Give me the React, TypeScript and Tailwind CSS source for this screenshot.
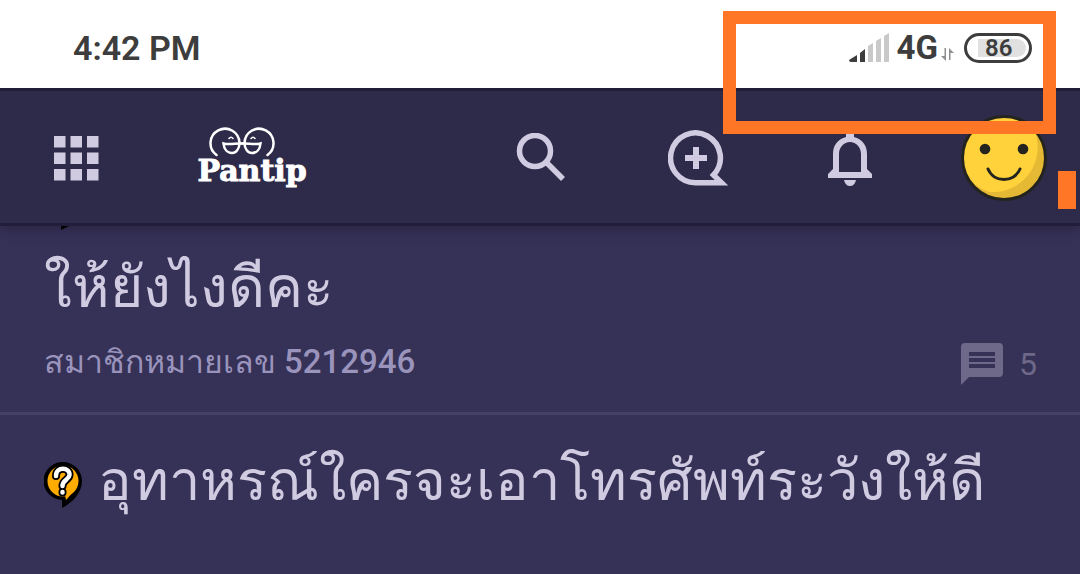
import React from 'react';

const SignalIcon: React.FC = () => (
  <svg viewBox="0 0 40 30" className="w-10 h-[30px] mr-2" aria-hidden="true">
    <path d="M0 27l8-5v7H2q-2 0-2-2z M11 20l5-4v13h-5z" fill="#3d3d3d" />
    <path d="M19 13l5-3v19h-5z M27 8l5-3v24h-5z M35 3l5-3v29h-5z" fill="#c9c9c9" />
  </svg>
);

const DataArrowsIcon: React.FC = () => (
  <svg viewBox="0 0 13 13" className="w-[13px] h-[13px] mt-3 mr-[10px]" aria-hidden="true">
    <path d="M3.500 0h1.500v13L0 8h3.500z M8 0l5 5H9.500v7H8V0z" fill="#8f8f8f" />
  </svg>
);

const StatusBar: React.FC = () => (
  <div className="relative z-10 h-[88px] bg-white flex items-center justify-between pl-[73px] pr-12 pt-2 text-[#3d3d3d]">
    <span className="text-[34px] leading-10 font-semibold">4:42 PM</span>
    <div className="flex items-center">
      <SignalIcon />
      <span className="text-[33px] leading-10 font-bold mr-[3px]">4G</span>
      <DataArrowsIcon />
      <div className="w-[68px] h-[30px] rounded-full border-3 border-[#3d3d3d] p-[3px] pl-[11px]">
        <div className="h-full bg-[#e0e0e0] rounded-l-xs rounded-r-full flex items-center pl-[7px] text-[24px] font-semibold">
          86
        </div>
      </div>
    </div>
  </div>
);

const GridIcon: React.FC = () => (
  <svg viewBox="0 0 45 45" className="w-[45px] h-[45px]" fill="#d1cbe2" aria-hidden="true">
    {[0, 16.5, 33].map((y) =>
      [0, 16.5, 33].map((x) => <rect key={`${x}-${y}`} x={x} y={y} width="11.500" height="11.500" />)
    )}
  </svg>
);

const Logo: React.FC = () => (
  <a href="#" className="flex flex-col items-center w-28 text-white" aria-label="Pantip">
    <svg viewBox="0 0 68 30" className="w-[68px] h-[30px] mr-5" fill="none" stroke="currentColor" strokeWidth="2.500" strokeLinecap="round" aria-hidden="true">
      <path d="M8.500 28A14.500 14.500 0 1 1 31.500 16C31.500 22 28 26 24 26C19 26 16 22 15.500 16.500C20 18 27 16.500 33 16.500" />
      <path d="M59.500 28A14.500 14.500 0 1 0 36.500 16C36.500 22 40 26 44 26C49 26 52 22 52.500 16.500C48 18 41 16.500 35 16.500" />
      <path d="M31 16.500h6" />
      <path d="M21 11.500q2-2.500 4 0 M43 11.500q2-2.500 4 0" strokeWidth="1.500" />
    </svg>
    <span className="-mt-1 font-['DejaVu_Serif',serif] font-bold text-[30px] leading-9 [-webkit-text-stroke:1px_white]">
      Pantip
    </span>
  </a>
);

const SearchIcon: React.FC = () => (
  <svg viewBox="0 0 50 50" className="w-[50px] h-[50px]" fill="none" stroke="#d1cbe2" aria-hidden="true">
    <circle cx="19" cy="18" r="15.500" strokeWidth="5.500" />
    <path d="M31 30l16 16" strokeWidth="5.500" />
  </svg>
);

const NewTopicIcon: React.FC = () => (
  <svg viewBox="0 0 60 56" className="w-[60px] h-14" fill="none" stroke="#d1cbe2" strokeWidth="5.500" aria-hidden="true">
    <path d="M53.500 52.700H28A24.900 24.900 0 1 1 45.500 45z" />
    <path d="M28 17v22M17 28h22" strokeWidth="6" />
  </svg>
);

const BellIcon: React.FC = () => (
  <svg viewBox="0 0 44 56" className="w-11 h-14" fill="#d1cbe2" aria-hidden="true">
    <path
      fillRule="evenodd"
      d="M18 0h8v7c8 2 13 8 13 17v15l5 5v4H0v-4l5-5V24C5 15 10 9 18 7z M11 42h22V24c0-7-5-12-11-12s-11 5-11 12z"
    />
    <path d="M16 50h12c-1 4-3 6-6 6s-5-2-6-6z" />
  </svg>
);

const SmileyAvatar: React.FC = () => (
  <svg viewBox="0 0 88 88" className="w-22 h-22" aria-hidden="true">
    <circle cx="44" cy="44" r="41.500" fill="#e6b935" />
    <path d="M75 17C86 50 62 80 29 78A36 36 0 0 1 3 40A41 41 0 0 1 75 17z" fill="#ffd13b" />
    <circle cx="44" cy="44" r="41.500" fill="none" stroke="#24241f" strokeWidth="3" />
    <circle cx="25" cy="35" r="5.300" fill="#24241f" />
    <circle cx="63" cy="35" r="5.300" fill="#24241f" />
    <path d="M28 55c6 14 26 14 32 0" fill="none" stroke="#24241f" strokeWidth="3" strokeLinecap="round" />
  </svg>
);

const NavBar: React.FC = () => (
  <header className="relative h-[138px] bg-[#2e2a49] border-y-3 border-[#221d39] flex items-center pl-[54px] pr-8 pt-[2px] shadow-[0_3px_12px_#2a2642]">
    <button type="button" aria-label="Menu" className="mr-[97px]">
      <GridIcon />
    </button>
    <Logo />
    <button type="button" aria-label="Search" className="ml-auto mr-[102px]">
      <SearchIcon />
    </button>
    <button type="button" aria-label="New topic" className="mr-[100px]">
      <NewTopicIcon />
    </button>
    <button type="button" aria-label="Notifications" className="mr-[88px]">
      <BellIcon />
    </button>
    <button type="button" aria-label="Profile">
      <SmileyAvatar />
    </button>
  </header>
);

const QuestionIcon: React.FC = () => (
  <svg viewBox="0 0 38 46" className="w-[38px] h-[46px] mt-2 shrink-0" aria-hidden="true">
    <path d="M19 0a19 19 0 0 1 19 19c0 12-10 22-20 27v-8A19 19 0 0 1 19 0z" fill="#000" />
    <circle cx="19" cy="19" r="15.500" fill="#ffab00" />
    <path d="M21 33l9-4-8 9z" fill="#ffab00" />
    <g fill="none" strokeLinecap="round" strokeLinejoin="round">
      <path d="M12 14c0-10 14-9 13.500-1-.5 5-7 5-7 11M18.500 30v.5" stroke="#000" strokeWidth="8" />
      <path d="M12 14c0-10 14-9 13.500-1-.5 5-7 5-7 11M18.500 30v.5" stroke="#fff" strokeWidth="4.500" />
    </g>
  </svg>
);

const CommentIcon: React.FC = () => (
  <svg viewBox="0 0 42 42" className="w-[42px] h-[42px]" aria-hidden="true">
    <path
      fillRule="evenodd"
      fill="#6e6889"
      d="M4 0h34q4 0 4 4v26q0 4-4 4H8l-8 8V4q0-4 4-4z M8 9v4h26V9z M8 15v4h26v-4z M8 21v4h26v-4z"
    />
  </svg>
);

const TopicList: React.FC = () => (
  <main className="text-[#d1cbe2]">
    <article className="relative h-[189px] pl-11 pr-[43px] pt-5 border-b-3 border-[#454064]">
      {/* tail of the topic icon that is scrolled under the nav bar */}
      <svg viewBox="0 0 8 4" className="absolute top-0 left-[61px] w-2 h-1" aria-hidden="true">
        <path d="M0 0h8L0 4z" fill="#000" />
      </svg>
      <h2 className="text-[57px] leading-[84px]">
        <a href="#">ให้ยังไงดีคะ</a>
      </h2>
      <div className="flex justify-between items-center text-[32px] leading-[60px]">
        <a href="#" className="text-[#9a94bd]">
          สมาชิกหมายเลข <span className="font-medium text-[33px]">5212946</span>
        </a>
        <span className="flex items-center gap-4 pt-1 text-[#6e6889]">
          <CommentIcon />5
        </span>
      </div>
    </article>
    <article className="flex items-center gap-4 px-11 pt-6">
      <QuestionIcon />
      <h2 className="text-[56px] leading-[84px] whitespace-nowrap">
        <a href="#">อุทาหรณ์ใครจะเอาโทรศัพท์ระวังให้ดี</a>
      </h2>
    </article>
  </main>
);

const App: React.FC = () => (
  <div className="relative min-h-screen overflow-hidden bg-[#363156] font-[Roboto,sans-serif]">
    <StatusBar />
    <NavBar />
    <TopicList />
    {/* orange highlight marks over the status icons */}
    <div className="absolute z-20 top-[11px] right-6 w-[333px] h-[123px] border-[13px] border-[#ff7627]" />
    <div className="absolute z-20 top-[171px] right-1 w-[18px] h-[38px] bg-[#ff7627]" />
  </div>
);

export default App;
